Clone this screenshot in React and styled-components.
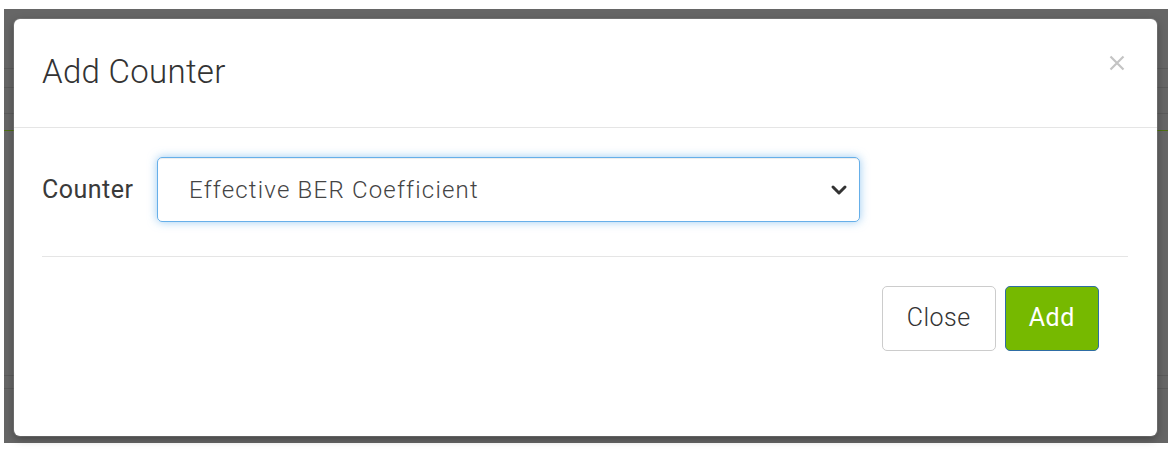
import React from 'react'
import styled, { createGlobalStyle } from 'styled-components'

const GlobalStyle = createGlobalStyle`
  html, body {
    margin: 0;
    padding: 0;
    background: #ffffff;
  }
  body {
    font-family: Roboto, "Liberation Sans", sans-serif;
  }
`

const Page = styled.div`
  width: 1173px;
  height: 451px;
  box-sizing: border-box;
  padding: 9px 5px 8px 4px;
  background: #ffffff;
`

// dimmed page behind the modal, with a few table lines showing through
const Backdrop = styled.div`
  height: 100%;
  box-sizing: border-box;
  padding: 10px 11px 7px 10px;
  background-color: #666666;
  background-image:
    linear-gradient(#5b5b5b, #5b5b5b),
    linear-gradient(#5b5b5b, #5b5b5b),
    linear-gradient(#5b5b5b, #5b5b5b),
    linear-gradient(#4d6e12, #4d6e12),
    linear-gradient(#5b5b5b, #5b5b5b),
    linear-gradient(#5b5b5b, #5b5b5b);
  background-repeat: no-repeat;
  background-size: 100% 1px;
  background-position: 0 59px, 0 78px, 0 104px, 0 121px, 0 366px, 0 379px;
`

const Modal = styled.div`
  height: 100%;
  box-sizing: border-box;
  background: #ffffff;
  border-radius: 6px;
  box-shadow: 0 0 0 1px rgba(255, 255, 255, 0.12), 0 3px 9px rgba(0, 0, 0, 0.35);
  display: flex;
  flex-direction: column;
`

const Header = styled.div`
  height: 109px;
  box-sizing: border-box;
  padding: 0 32px 0 28px;
  border-bottom: 1px solid #e5e5e5;
  display: flex;
  align-items: center;
  justify-content: space-between;
`

const Title = styled.h4`
  margin: 0 0 4px;
  font-size: 33px;
  font-weight: 300;
  letter-spacing: 0.3px;
  color: #333333;
`

const CloseX = styled.button`
  border: 0;
  background: none;
  padding: 0;
  margin-bottom: 20px;
  width: 16px;
  height: 16px;
  cursor: pointer;
  svg {
    display: block;
  }
`

const Body = styled.div`
  margin: 0 29px 0 28px;
  padding: 29px 0 34px;
  border-bottom: 1px solid #e5e5e5;
  display: flex;
  align-items: center;
  gap: 21px;
`

const Label = styled.label`
  width: 94px;
  font-size: 25px;
  font-weight: 400;
  color: #3a3a3a;
  letter-spacing: 0.5px;
  white-space: nowrap;
`

const SelectBox = styled.div`
  width: 703px;
  height: 65px;
  box-sizing: border-box;
  border: 1px solid #66afe9;
  border-radius: 5px;
  box-shadow: inset 0 1px 1px rgba(0, 0, 0, 0.075), 0 0 10px rgba(102, 175, 233, 0.65);
  padding: 0 11px 0 31px;
  display: flex;
  align-items: center;
  justify-content: space-between;
`

const SelectText = styled.span`
  font-size: 24px;
  font-weight: 300;
  color: #444444;
  letter-spacing: 1.2px;
`

const Footer = styled.div`
  padding: 29px 58px 0 0;
  display: flex;
  justify-content: flex-end;
  gap: 9px;
`

const Button = styled.button`
  height: 65px;
  box-sizing: border-box;
  padding: 0 ${p => (p.$primary ? 23 : 24)}px 3px;
  border-radius: 5px;
  border: 1px solid ${p => (p.$primary ? '#2e6da4' : '#cccccc')};
  background: ${p => (p.$primary ? '#76b900' : '#ffffff')};
  color: ${p => (p.$primary ? '#ffffff' : '#333333')};
  font-family: Roboto, "Liberation Sans", sans-serif;
  font-size: 25px;
  font-weight: ${p => (p.$primary ? 400 : 300)};
  letter-spacing: ${p => (p.$primary ? 0.6 : 0.5)}px;
  cursor: pointer;
`

function Chevron() {
  return (
    <svg width="18" height="12" viewBox="0 0 18 12">
      <path d="M3 3 L9 9 L15 3" fill="none" stroke="#333" strokeWidth="3" strokeLinecap="round" strokeLinejoin="round" />
    </svg>
  )
}

export default function App() {
  return (
    <Page>
      <GlobalStyle />
      <Backdrop>
        <Modal>
          <Header>
            <Title>Add Counter</Title>
            <CloseX aria-label="Close">
              <svg width="16" height="16" viewBox="0 0 16 16">
                <path d="M1.5 1.5 L14.5 14.5 M14.5 1.5 L1.5 14.5" stroke="#c4c4c4" strokeWidth="2.2" />
              </svg>
            </CloseX>
          </Header>
          <Body>
            <Label>Counter</Label>
            <SelectBox>
              <SelectText>Effective BER Coefficient</SelectText>
              <Chevron />
            </SelectBox>
          </Body>
          <Footer>
            <Button>Close</Button>
            <Button $primary>Add</Button>
          </Footer>
        </Modal>
      </Backdrop>
    </Page>
  )
}
